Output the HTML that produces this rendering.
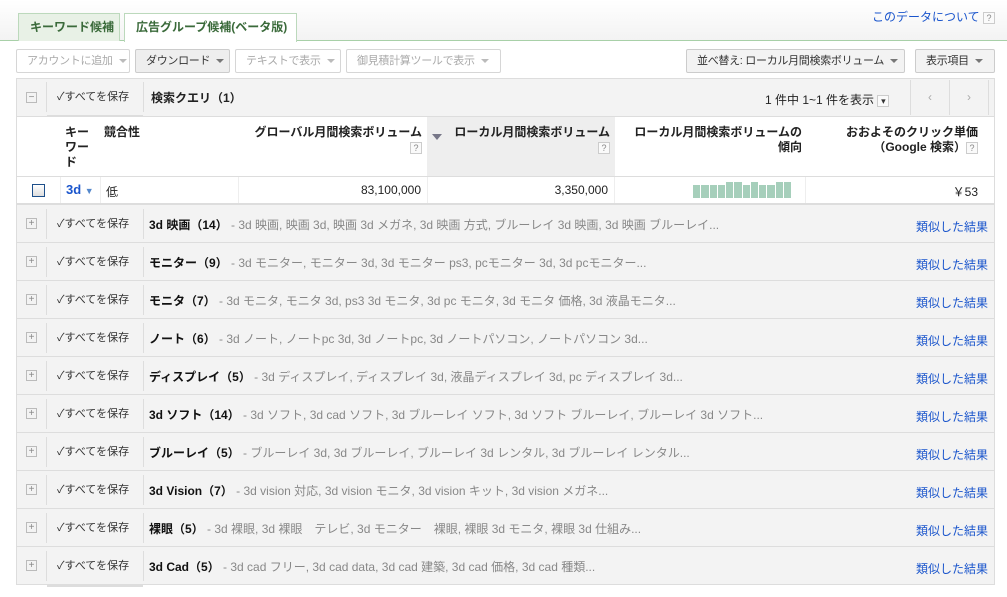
<!DOCTYPE html>
<html><head><meta charset="utf-8"><style>
*{margin:0;padding:0;box-sizing:border-box}
body{width:1007px;height:597px;overflow:hidden;background:#fff;font-family:"Liberation Sans","Noto Sans CJK JP",sans-serif;font-size:12px;color:#222;position:relative}
.a{position:absolute;white-space:nowrap}
.tabbar{left:0;top:0;width:1007px;height:41px;background:linear-gradient(#fff,#f3f3f3);border-bottom:1px solid #a8d0a8}
.tab{top:13px;height:28px;border:1px solid #bcd9bc;border-bottom:none;font-weight:bold;color:#3a6a3a;font-size:12px;line-height:26px;padding-left:11px}
.btn{top:49px;height:24px;border:1px solid #d6d6d6;background:#fff;color:#aaa;font-size:11px;line-height:22px;padding-left:10px;border-radius:2px;overflow:hidden;letter-spacing:-0.3px}
.btn.on{background:#eee;color:#333;border-color:#ccc}
.tri{display:inline-block;width:0;height:0;border-left:4px solid transparent;border-right:4px solid transparent;border-top:4px solid #777;vertical-align:middle;margin-left:6px}
.panel{left:16px;top:78px;width:979px;height:507px;border:1px solid #ddd;background:#f3f3f3}
.save{height:30px;width:98px;background:#f3f3f3;border-left:1px solid #ddd;border-right:1px solid #ddd;font-size:11px;line-height:30px;padding-left:10px;color:#333}
.save:after{content:"";position:absolute;left:0;right:0;bottom:-6px;height:3px;background:#ddd}
.pm{width:11px;height:11px;border:1px solid #bbb;font-size:10px;line-height:9px;text-align:center;color:#888}
.grp{left:17px;width:977px;height:38px;border-top:1px solid #ddd;background:#f3f3f3}
.gt{left:132px;top:11px;font-size:12px;color:#888;white-space:nowrap}
.gt b{color:#111}
.lnk{right:6px;top:13px;color:#1a55cc;font-size:12px}
.hd{font-weight:bold;font-size:12px;color:#222;line-height:15px}
.q{display:inline-block;width:12px;height:12px;border:1px solid #ccc;font-size:9px;line-height:10px;text-align:center;color:#888;font-weight:normal;background:#fafafa}
</style></head><body>
<div class="a tabbar"></div>
<div class="a tab" style="left:18px;width:102px;background:#e8f1e6">キーワード候補</div>
<div class="a tab" style="left:124px;width:173px;height:29px;background:#fff">広告グループ候補(ベータ版)</div>
<div class="a" style="left:872px;top:8px;color:#1a55cc;font-size:12px">このデータについて <span class="q">?</span></div>

<div class="a btn" style="left:16px;width:114px">アカウントに追加<span class="tri" style="border-top-color:#bbb"></span></div>
<div class="a btn on" style="left:135px;width:95px">ダウンロード<span class="tri"></span></div>
<div class="a btn" style="left:235px;width:106px">テキストで表示<span class="tri" style="border-top-color:#bbb"></span></div>
<div class="a btn" style="left:346px;width:155px">御見積計算ツールで表示<span class="tri" style="border-top-color:#bbb"></span></div>
<div class="a btn on" style="left:686px;width:219px;background:#f3f3f3">並べ替え: ローカル月間検索ボリューム<span class="tri"></span></div>
<div class="a btn on" style="left:915px;width:80px;background:#f3f3f3">表示項目<span class="tri"></span></div>

<div class="a panel"></div>
<div class="a pm" style="left:26px;top:92px">−</div>
<div class="a save" style="left:46px;top:82px">✓すべてを保存</div>
<div class="a hd" style="left:151px;top:91px">検索クエリ（1）</div>
<div class="a" style="left:765px;top:91px;font-size:12px">1 件中 1~1 件を表示 <span class="q" style="color:#333">▾</span></div>
<div class="a" style="left:910px;top:80px;width:40px;height:35px;border-left:1px solid #ddd;border-right:1px solid #ddd;color:#aaa;text-align:center;line-height:35px">‹</div>
<div class="a" style="left:950px;top:80px;width:39px;height:35px;border-right:1px solid #ddd;color:#aaa;text-align:center;line-height:35px">›</div>

<div class="a" style="left:17px;top:116px;width:977px;height:88px;background:#fff;border-top:1px solid #ddd"></div>
<div class="a" style="left:427px;top:117px;width:188px;height:59px;background:#eee"></div>
<div class="a hd" style="left:65px;top:125px">キー<br>ワー<br>ド</div>
<div class="a hd" style="left:104px;top:125px">競合性</div>
<div class="a hd" style="left:238px;top:125px;width:184px;text-align:right">グローバル月間検索ボリューム<br><span class="q">?</span></div>
<div class="a" style="left:432px;top:134px;border-left:5px solid transparent;border-right:5px solid transparent;border-top:6px solid #778"></div>
<div class="a hd" style="left:445px;top:125px;width:165px;text-align:right">ローカル月間検索ボリューム<br><span class="q">?</span></div>
<div class="a hd" style="left:620px;top:125px;width:182px;text-align:right">ローカル月間検索ボリュームの<br>傾向</div>
<div class="a hd" style="left:806px;top:125px;width:172px;text-align:right">おおよそのクリック単価<br>（Google 検索）<span class="q">?</span></div>
<div class="a" style="left:17px;top:176px;width:977px;height:1px;background:#ddd"></div>
<div class="a" style="left:32px;top:184px;width:13px;height:13px;border:1px solid #1d4f8a;background:linear-gradient(#fff,#ddd)"></div>
<div class="a" style="left:60px;top:177px;width:1px;height:27px;background:#eee"></div>
<div class="a" style="left:100px;top:177px;width:1px;height:27px;background:#eee"></div>
<div class="a" style="left:238px;top:177px;width:1px;height:27px;background:#eee"></div>
<div class="a" style="left:427px;top:177px;width:1px;height:27px;background:#eee"></div>
<div class="a" style="left:614px;top:177px;width:1px;height:27px;background:#eee"></div>
<div class="a" style="left:805px;top:177px;width:1px;height:27px;background:#eee"></div>
<div class="a" style="left:66px;top:182px;color:#1a55cc;font-weight:bold;font-size:13px">3d <span style="font-size:9px;color:#58c">▼</span></div>
<div class="a" style="left:106px;top:183px">低</div>
<div class="a" style="left:300px;top:183px;width:121px;text-align:right">83,100,000</div>
<div class="a" style="left:480px;top:183px;width:128px;text-align:right">3,350,000</div>
<div class="a" style="left:693px;top:182px;width:98px;height:16px;display:flex;gap:1px;align-items:flex-end">
<i style="flex:1;height:13px;background:#a6cfbb"></i><i style="flex:1;height:13px;background:#a6cfbb"></i><i style="flex:1;height:13px;background:#a6cfbb"></i><i style="flex:1;height:13px;background:#a6cfbb"></i><i style="flex:1;height:16px;background:#a6cfbb"></i><i style="flex:1;height:16px;background:#a6cfbb"></i><i style="flex:1;height:13px;background:#a6cfbb"></i><i style="flex:1;height:16px;background:#a6cfbb"></i><i style="flex:1;height:13px;background:#a6cfbb"></i><i style="flex:1;height:13px;background:#a6cfbb"></i><i style="flex:1;height:16px;background:#a6cfbb"></i><i style="flex:1;height:16px;background:#a6cfbb"></i></div>
<div class="a" style="left:900px;top:183px;width:78px;text-align:right">￥53</div>
<div class="a" style="left:17px;top:203px;width:977px;height:2px;background:#ddd"></div>

<div class="a grp" style="top:204px"><div class="a pm" style="left:9px;top:13px">+</div><div class="a save" style="left:29px;top:4px">✓すべてを保存</div><div class="a gt"><b>3d 映画（14）</b> - 3d 映画, 映画 3d, 映画 3d メガネ, 3d 映画 方式, ブルーレイ 3d 映画, 3d 映画 ブルーレイ...</div><div class="a lnk">類似した結果</div></div>
<div class="a grp" style="top:242px"><div class="a pm" style="left:9px;top:13px">+</div><div class="a save" style="left:29px;top:4px">✓すべてを保存</div><div class="a gt"><b>モニター（9）</b> - 3d モニター, モニター 3d, 3d モニター ps3, pcモニター 3d, 3d pcモニター...</div><div class="a lnk">類似した結果</div></div>
<div class="a grp" style="top:280px"><div class="a pm" style="left:9px;top:13px">+</div><div class="a save" style="left:29px;top:4px">✓すべてを保存</div><div class="a gt"><b>モニタ（7）</b> - 3d モニタ, モニタ 3d, ps3 3d モニタ, 3d pc モニタ, 3d モニタ 価格, 3d 液晶モニタ...</div><div class="a lnk">類似した結果</div></div>
<div class="a grp" style="top:318px"><div class="a pm" style="left:9px;top:13px">+</div><div class="a save" style="left:29px;top:4px">✓すべてを保存</div><div class="a gt"><b>ノート（6）</b> - 3d ノート, ノートpc 3d, 3d ノートpc, 3d ノートパソコン, ノートパソコン 3d...</div><div class="a lnk">類似した結果</div></div>
<div class="a grp" style="top:356px"><div class="a pm" style="left:9px;top:13px">+</div><div class="a save" style="left:29px;top:4px">✓すべてを保存</div><div class="a gt"><b>ディスプレイ（5）</b> - 3d ディスプレイ, ディスプレイ 3d, 液晶ディスプレイ 3d, pc ディスプレイ 3d...</div><div class="a lnk">類似した結果</div></div>
<div class="a grp" style="top:394px"><div class="a pm" style="left:9px;top:13px">+</div><div class="a save" style="left:29px;top:4px">✓すべてを保存</div><div class="a gt"><b>3d ソフト（14）</b> - 3d ソフト, 3d cad ソフト, 3d ブルーレイ ソフト, 3d ソフト ブルーレイ, ブルーレイ 3d ソフト...</div><div class="a lnk">類似した結果</div></div>
<div class="a grp" style="top:432px"><div class="a pm" style="left:9px;top:13px">+</div><div class="a save" style="left:29px;top:4px">✓すべてを保存</div><div class="a gt"><b>ブルーレイ（5）</b> - ブルーレイ 3d, 3d ブルーレイ, ブルーレイ 3d レンタル, 3d ブルーレイ レンタル...</div><div class="a lnk">類似した結果</div></div>
<div class="a grp" style="top:470px"><div class="a pm" style="left:9px;top:13px">+</div><div class="a save" style="left:29px;top:4px">✓すべてを保存</div><div class="a gt"><b>3d Vision（7）</b> - 3d vision 対応, 3d vision モニタ, 3d vision キット, 3d vision メガネ...</div><div class="a lnk">類似した結果</div></div>
<div class="a grp" style="top:508px"><div class="a pm" style="left:9px;top:13px">+</div><div class="a save" style="left:29px;top:4px">✓すべてを保存</div><div class="a gt"><b>裸眼（5）</b> - 3d 裸眼, 3d 裸眼　テレビ, 3d モニター　裸眼, 裸眼 3d モニタ, 裸眼 3d 仕組み...</div><div class="a lnk">類似した結果</div></div>
<div class="a grp" style="top:546px"><div class="a pm" style="left:9px;top:13px">+</div><div class="a save" style="left:29px;top:4px">✓すべてを保存</div><div class="a gt"><b>3d Cad（5）</b> - 3d cad フリー, 3d cad data, 3d cad 建築, 3d cad 価格, 3d cad 種類...</div><div class="a lnk">類似した結果</div></div>
</body></html>
